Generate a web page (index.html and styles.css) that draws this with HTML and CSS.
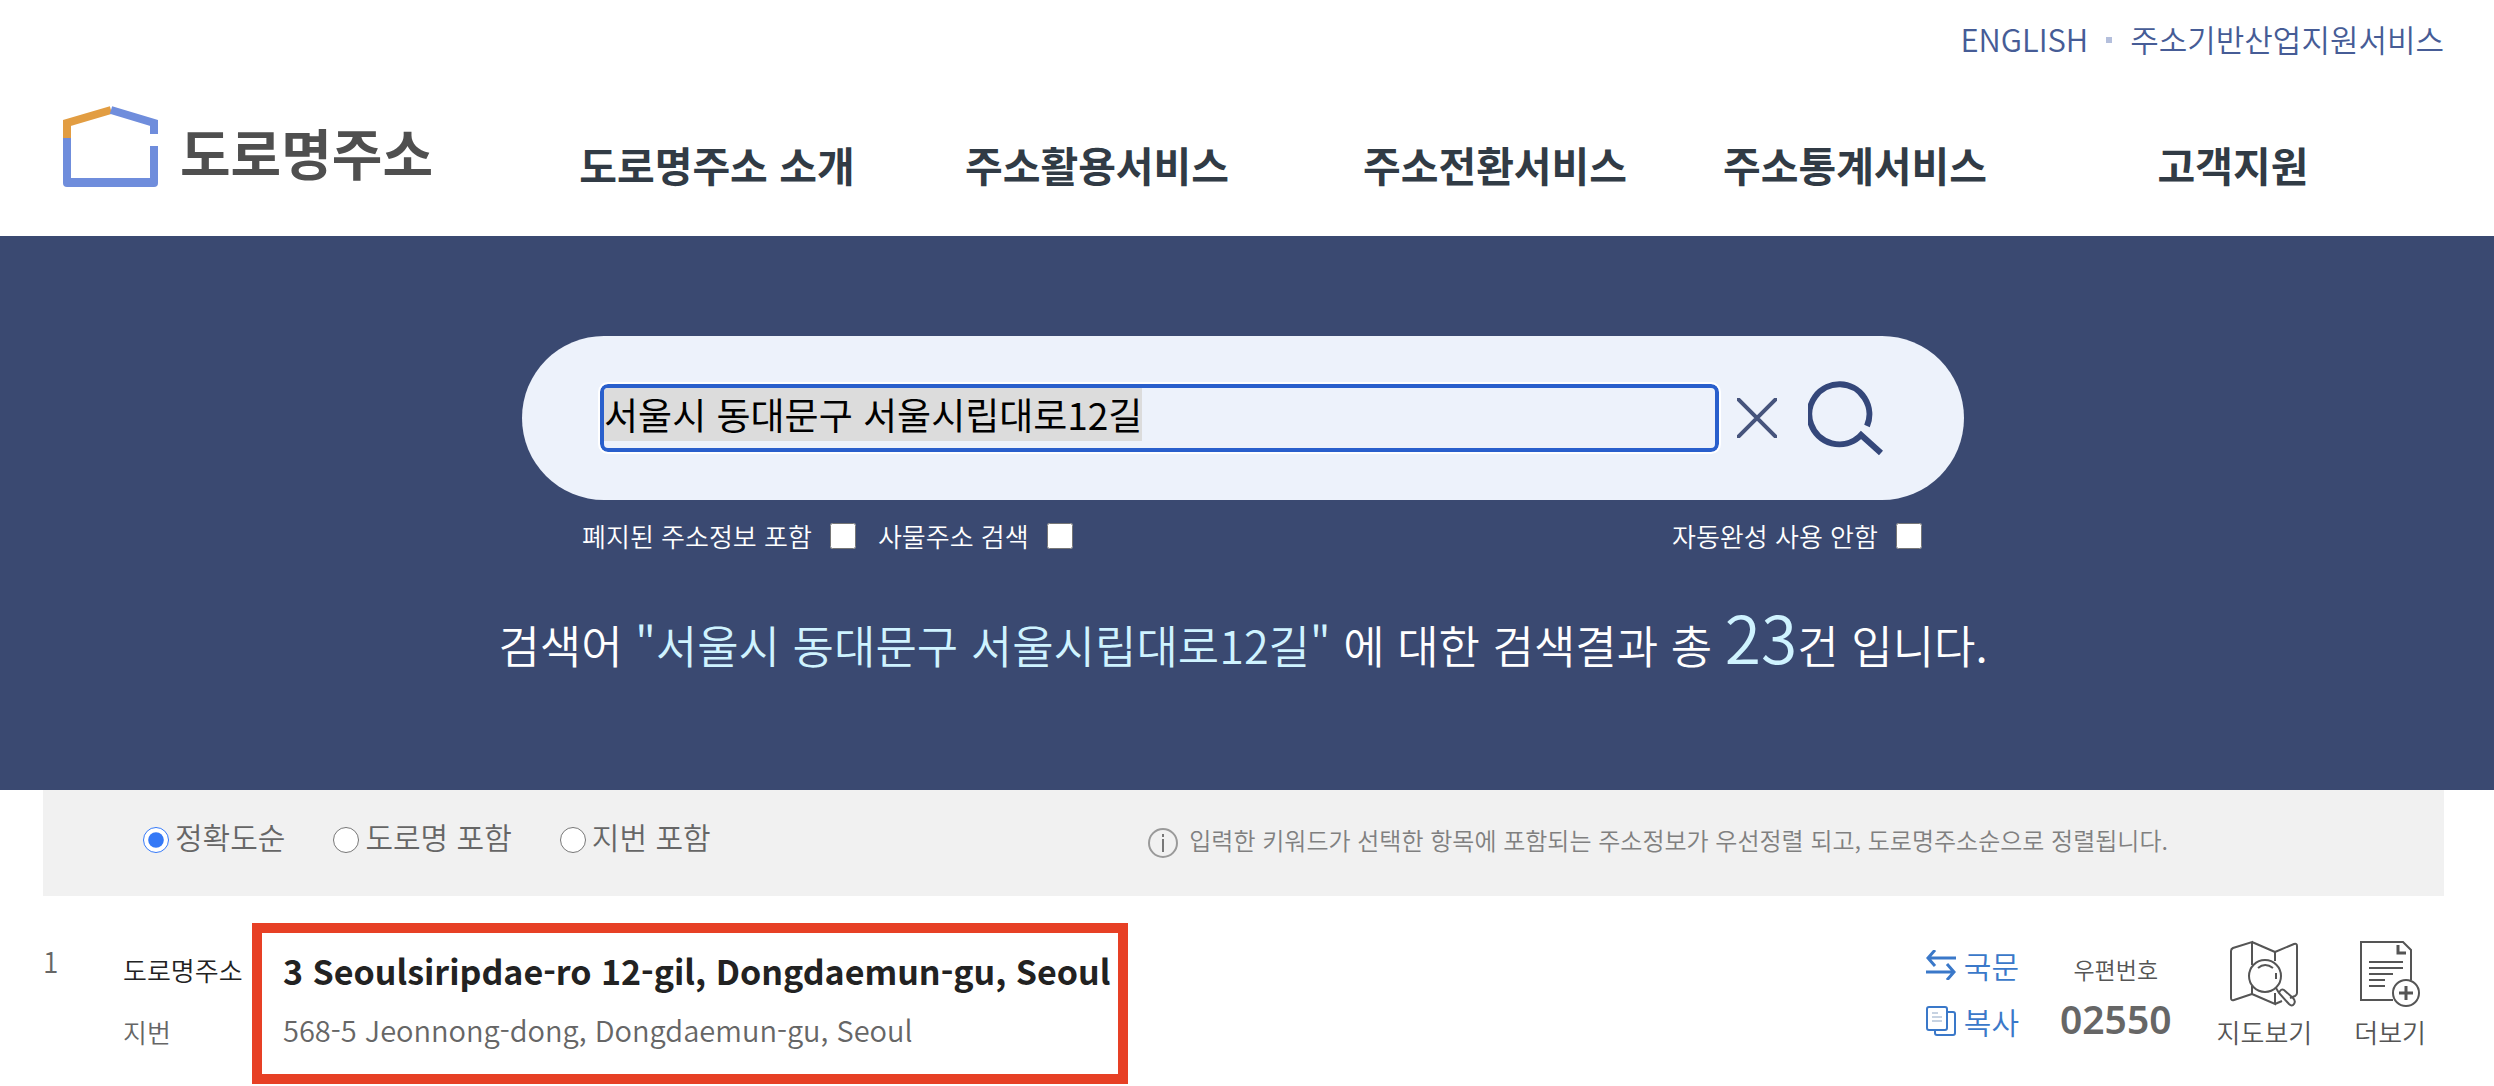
FILE: index.html
```
<!DOCTYPE html>
<html lang="ko">

<head>
    <meta charset="UTF-8">
    <meta name="viewport" content="width=device-width, initial-scale=1.0">
    <title>도로명주소</title>
    <link rel="stylesheet" href="styles.css">
</head>

<body>
    <header class="header">
        <div class="util">
            <a href="#">ENGLISH</a>
            <span class="dot"></span>
            <a href="#">주소기반산업지원서비스</a>
        </div>
        <div class="gnb">
            <a href="#" class="logo">
                <svg viewBox="0 0 96 82" width="96" height="82" fill="none" stroke="#6f8ddc" stroke-width="8">
                    <path d="M5 33V18L49 5" stroke="#e29d42" />
                    <path d="M49 5L92 18V29M92 41V76M5 33V76" />
                    <path d="M1 73H96V78Q96 82 92 82H5Q1 82 1 78Z" fill="#6f8ddc" stroke="none" />
                </svg>
                <span>도로명주소</span>
            </a>
            <nav class="menu">
                <a href="#">도로명주소 소개</a>
                <a href="#">주소활용서비스</a>
                <a href="#">주소전환서비스</a>
                <a href="#">주소통계서비스</a>
                <a href="#">고객지원</a>
            </nav>
        </div>
    </header>

    <!-- 검색 영역 -->
    <section class="search">
        <form class="search-box">
            <input type="text" id="keyword" class="keyword" aria-label="검색어" value="서울시 동대문구 서울시립대로12길" autocomplete="off" autofocus>
            <button type="reset" class="btn-clear" aria-label="지우기">
                <svg viewBox="0 0 40 40" width="40" height="40">
                    <path d="M0 0L40 40M40 0L0 40" stroke="#46547c" stroke-width="4" />
                </svg>
            </button>
            <button type="submit" class="btn-search" aria-label="검색">
                <svg viewBox="0 0 76 76" width="76" height="76" fill="none" stroke="#34477a" stroke-width="6">
                    <path d="M59 46A30 30 0 1 0 51 57L53 55L73 73" />
                </svg>
            </button>
        </form>
        <div class="options">
            <label>폐지된 주소정보 포함<input type="checkbox"></label>
            <label>사물주소 검색<input type="checkbox"></label>
            <label class="auto">자동완성 사용 안함<input type="checkbox"></label>
        </div>
        <p class="summary">검색어 <em>"서울시 동대문구 서울시립대로12길"</em> 에 대한 검색결과 총 <em class="count">23</em>건 입니다.</p>
    </section>

    <!-- 검색 결과 -->
    <main class="result">
        <div class="sort">
            <div class="sort-list">
                <label><input type="radio" name="sort" checked>정확도순</label>
                <label><input type="radio" name="sort">도로명 포함</label>
                <label><input type="radio" name="sort">지번 포함</label>
            </div>
            <p class="guide">
                <svg viewBox="0 0 32 32" width="32" height="32" fill="none" stroke="#9a9a9a" stroke-width="2">
                    <circle cx="16" cy="16" r="14" />
                    <path d="M16 12V25M16 7V10" stroke="#777" />
                </svg>
                <span>입력한 키워드가 선택한 항목에 포함되는 주소정보가 우선정렬 되고, 도로명주소순으로 정렬됩니다.</span>
            </p>
        </div>

        <div class="item">
            <span class="num">1</span>
            <div class="label">
                <span class="road">도로명주소</span>
                <span>지번</span>
            </div>
            <div class="address">
                <strong>3 Seoulsiripdae-ro 12-gil, Dongdaemun-gu, Seoul</strong>
                <span>568-5 Jeonnong-dong, Dongdaemun-gu, Seoul</span>
            </div>
            <div class="tools">
                <button type="button">
                    <svg viewBox="0 0 30 30" width="30" height="30" fill="none" stroke="#3a78c9" stroke-width="3">
                        <path d="M30 8H2M9 0L2 8L9 16M0 22H28M21 14L28 22L21 30" />
                    </svg>
                    국문
                </button>
                <button type="button">
                    <svg viewBox="0 0 30 30" width="30" height="30" fill="none" stroke="#3a78c9" stroke-width="2">
                        <rect x="1" y="1" width="20" height="23" rx="2" />
                        <path d="M21 6H27Q29 6 29 8V27Q29 29 27 29H11Q9 29 9 27V24" />
                        <path d="M6 7H12M6 11H16M6 15H16" stroke="#8fa6c4" stroke-width="1" />
                    </svg>
                    복사
                </button>
            </div>
            <div class="zip">
                <span>우편번호</span>
                <b>02550</b>
            </div>
            <button type="button" class="btn-view">
                <svg viewBox="0 0 70 68" width="70" height="68" fill="none" stroke="#555" stroke-width="2">
                    <path d="M23 25V2L4 8Q2 9 2 11V58Q2 61 5 60L23 54V46M23 54L46 64V53M23 2L46 12V21M46 12L65 4Q68 3 68 6V53Q68 55 66 56L61 58M46 64L53 61" />
                    <circle cx="36" cy="36" r="16" />
                    <path d="M29 28Q36 22 44 28M47 33V39" />
                    <path d="M47 48L50 53L60 64Q63 67 65 64Q67 61 64 58L55 50Q52 48 50 53" />
                </svg>
                지도보기
            </button>
            <button type="button" class="btn-view">
                <svg viewBox="0 0 62 68" width="62" height="68" fill="none" stroke="#555" stroke-width="2">
                    <path d="M34 60H2V2H44L52 10V40" />
                    <path d="M39 5V13H47" stroke-width="3" />
                    <path d="M10 22H44M10 28H44M10 34H34M10 40H26M10 46H26" />
                    <circle cx="47" cy="53" r="13" />
                    <path d="M40 53H54M47 46V60" stroke-width="3" />
                </svg>
                더보기
            </button>
        </div>
    </main>

    <script>
        const keyword = document.querySelector('#keyword')
        keyword.focus()
        keyword.select()
    </script>
</body>

</html>
```
FILE: styles.css
```
* {
    box-sizing: border-box;
}

body,
p,
button,
input {
    margin: 0;
    padding: 0;
}

body,
button,
input {
    font-family: "Noto Sans CJK KR", sans-serif;
}

body {
    background-color: #fff;
    color: #666;
    font-weight: 350;
}

a {
    color: inherit;
    text-decoration: none;
}

button {
    background: none;
    border: none;
    color: inherit;
    font-weight: inherit;
    cursor: pointer;
}

svg {
    display: block;
    flex-shrink: 0;
}

/* 상단 */
.header {
    height: 236px;
}

.util {
    display: flex;
    justify-content: flex-end;
    align-items: center;
    height: 76px;
    padding-right: 50px;
    font-size: 31px;
    color: #465c96;
}

.dot {
    width: 6px;
    height: 6px;
    margin: 4px 18px 0;
    background-color: #b4bfdc;
}

.gnb {
    display: flex;
    align-items: flex-start;
    padding: 29px 27px 0 62px;
}

.logo {
    display: flex;
    gap: 22px;
    font-size: 55px;
    line-height: 92px;
    font-weight: 700;
    color: #4f4f4f;
}

.menu {
    flex: 1;
    display: grid;
    grid-template-columns: 396fr 364fr 432fr 288fr 468fr;
    padding-left: 86px;
    padding-top: 35px;
    text-align: center;
    font-size: 41px;
    line-height: 48px;
    font-weight: 700;
    color: #313b45;
}

/* 검색 */
.search {
    background-color: #3a4971;
    height: 554px;
    padding-top: 100px;
    padding-right: 8px;
    color: #fff;
}

.search-box {
    display: flex;
    align-items: center;
    width: 58%;
    height: 164px;
    margin: 0 auto;
    padding: 0 80px 0 78px;
    border-radius: 82px;
    background-color: #edf2fb;
}

.keyword {
    flex: 1;
    height: 68px;
    padding-bottom: 8px;
    border: 4px solid #295fcc;
    border-radius: 8px;
    outline: 2px solid #fff;
    background-color: #edf2fb;
    font-size: 37px;
    line-height: 60px;
    font-weight: 400;
    color: #000;
}

.keyword::selection {
    background-color: #dcdcdc;
    color: #000;
}

.btn-clear {
    margin: 0 31px 0 18px;
}

.options {
    display: flex;
    width: 58%;
    margin: 0 auto;
    padding: 16px 42px 0 60px;
    gap: 22px;
    font-size: 26px;
    line-height: 40px;
}

.options label {
    display: flex;
    align-items: center;
    gap: 18px;
}

.options input {
    width: 26px;
    height: 26px;
}

.options .auto {
    margin-left: auto;
}

.summary {
    padding-top: 31px;
    text-align: center;
    font-size: 45px;
    line-height: 96px;
}

.summary em {
    font-style: normal;
    color: #cff3ff;
}

.summary .count {
    font-size: 66px;
}

/* 결과 */
.result {
    padding: 0 50px 0 43px;
}

.sort {
    display: flex;
    align-items: center;
    height: 106px;
    padding-left: 100px;
    background-color: #f1f1f1;
}

.sort-list {
    display: flex;
    flex: 1;
    gap: 48px;
    padding-bottom: 14px;
    font-size: 30px;
}

.sort-list label {
    display: flex;
    align-items: center;
    gap: 6px;
}

.sort-list input {
    width: 26px;
    height: 26px;
    margin-top: 8px;
    accent-color: #3478f6;
}

.guide {
    display: flex;
    align-items: center;
    gap: 10px;
    padding-right: 276px;
    font-size: 24px;
    color: #808080;
}

.guide span {
    padding-bottom: 8px;
}

.item {
    display: flex;
    padding-top: 27px;
}

.num {
    width: 80px;
    padding-top: 20px;
    font-size: 28px;
    line-height: 36px;
}

.label {
    display: flex;
    flex-direction: column;
    gap: 22px;
    width: 129px;
    padding-top: 27px;
    font-size: 26px;
    line-height: 40px;
}

.road {
    color: #222;
}

.address {
    display: flex;
    flex-direction: column;
    gap: 14px;
    width: 876px;
    height: 161px;
    padding: 16px 0 0 21px;
    border: 10px solid #e74025;
    font-size: 29px;
    line-height: 44px;
}

.address strong {
    font-size: 34px;
    font-weight: 700;
    color: #222;
}

.tools {
    display: flex;
    flex-direction: column;
    gap: 16px;
    margin-left: auto;
    padding-top: 22px;
    color: #3a78c9;
}

.tools button {
    display: flex;
    align-items: center;
    gap: 8px;
    font-size: 30px;
    line-height: 40px;
}

.zip {
    display: flex;
    flex-direction: column;
    align-items: center;
    gap: 6px;
    margin: 0 45px 0 41px;
    padding-top: 24px;
    font-size: 23px;
    line-height: 44px;
}

.zip span {
    color: #555;
}

.zip b {
    font-family: "Noto Sans", sans-serif;
    font-size: 39px;
    font-weight: 600;
}

.btn-view {
    display: flex;
    flex-direction: column;
    align-items: center;
    gap: 4px;
    margin-right: 18px;
    padding-top: 17px;
    font-size: 26px;
    line-height: 40px;
    color: #555;
}

.btn-view + .btn-view {
    margin-left: 24px;
}
```
